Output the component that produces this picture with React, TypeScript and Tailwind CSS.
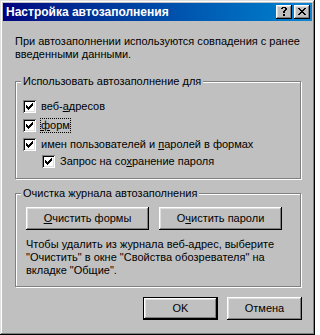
import React from "react";

const raised =
  "shadow-[inset_-1px_-1px_0_0_#000000,inset_1px_1px_0_0_#ffffff,inset_-2px_-2px_0_0_#808080,inset_2px_2px_0_0_#dfdfdf]";

function Check() {
  return (
    <div className="w-[13px] h-[13px] shrink-0 bg-white flex items-start justify-start pl-[3px] pt-[3px] shadow-[inset_1px_1px_0_0_#808080,inset_-1px_-1px_0_0_#ffffff,inset_2px_2px_0_0_#000000,inset_-2px_-2px_0_0_#dfdfdf]">
      <svg width="7" height="7" viewBox="0 0 7 7" shapeRendering="crispEdges">
        <path
          fill="#000"
          d="M6 0h1v1h-1z M5 1h2v1h-2z M0 2h1v1h-1z M4 2h3v1h-3z M0 3h2v1h-2z M3 3h3v1h-3z M0 4h5v1h-5z M1 5h3v1h-3z M2 6h1v1h-1z"
        />
      </svg>
    </div>
  );
}

function Row({ children, className = "" }: { children: React.ReactNode; className?: string }) {
  return (
    <div className={`flex items-center h-[13px] ${className}`}>
      <Check />
      <span className="ml-[5px] leading-[13px] whitespace-nowrap">{children}</span>
    </div>
  );
}

function Btn({ children, className = "" }: { children: React.ReactNode; className?: string }) {
  return (
    <div
      className={`h-[23px] flex items-center justify-center bg-[#c0c0c0] leading-[13px] ${raised} ${className}`}
    >
      {children}
    </div>
  );
}

export default function App() {
  return (
    <div className="w-[315px] h-[335px] bg-[#c0c0c0] p-[3px] flex flex-col text-[11px] text-black [font-family:'Liberation_Sans',Arial,sans-serif] shadow-[inset_-1px_-1px_0_0_#000000,inset_1px_1px_0_0_#dfdfdf,inset_-2px_-2px_0_0_#808080,inset_2px_2px_0_0_#ffffff]">
      {/* title bar */}
      <div className="h-[18px] shrink-0 flex items-center bg-linear-to-r from-[#000080] to-[#1084d0] pl-[3px] pr-[2px]">
        <span className="flex-1 text-white font-bold text-[12px] leading-[14px] whitespace-nowrap">
          Настройка автозаполнения
        </span>
        <div className={`w-[16px] h-[14px] bg-[#c0c0c0] flex items-start justify-start pl-[5px] pt-[2px] ${raised}`}>
          <svg width="6" height="9" viewBox="0 0 6 9" shapeRendering="crispEdges">
            <path
              fill="#000"
              d="M1 0h4v1H1z M0 1h2v1H0z M4 1h2v1H4z M4 2h2v1H4z M3 3h2v1H3z M2 4h2v1H2z M2 5h2v1H2z M2 7h2v1H2z M2 8h2v1H2z"
            />
          </svg>
        </div>
        <div className={`ml-[2px] w-[16px] h-[14px] bg-[#c0c0c0] flex items-start justify-start pl-[4px] pt-[3px] ${raised}`}>
          <svg width="8" height="7" viewBox="0 0 8 7" shapeRendering="crispEdges">
            <path
              fill="#000"
              d="M0 0h2v1H0z M6 0h2v1H6z M1 1h2v1H1z M5 1h2v1H5z M2 2h4v1H2z M3 3h2v1H3z M2 4h4v1H2z M1 5h2v1H1z M5 5h2v1H5z M0 6h2v1H0z M6 6h2v1H6z"
            />
          </svg>
        </div>
      </div>

      {/* body */}
      <div className="flex flex-col pl-[12px] pr-[11px]">
        <p className="mt-[14px] leading-[13px] whitespace-nowrap">
          При автозаполнении используются совпадения с ранее
          <br />
          введенными данными.
        </p>

        {/* group 1 */}
        <div className="mt-[20px] border border-[#808080] shadow-[inset_1px_1px_0_0_#ffffff,1px_1px_0_0_#ffffff] flex flex-col pb-[10px]">
          <div className="-mt-[7px] ml-[5px] px-[2px] w-fit bg-[#c0c0c0] leading-[13px] whitespace-nowrap">
            Использовать автозаполнение для
          </div>
          <Row className="mt-[12px] ml-[7px]">
            веб-<span className="underline decoration-1 underline-offset-[1px]">а</span>дресов
          </Row>
          <div className="flex items-center h-[13px] mt-[6px] ml-[7px]">
            <Check />
            <span className="ml-[4px] leading-[13px] border border-dotted border-black whitespace-nowrap">
              <span className="underline decoration-1 underline-offset-[1px]">ф</span>орм
            </span>
          </div>
          <Row className="mt-[6px] ml-[7px]">
            имен пользователей и <span className="underline decoration-1 underline-offset-[1px]">п</span>аролей в формах
          </Row>
          <Row className="mt-[4px] ml-[26px]">
            Запрос на со<span className="underline decoration-1 underline-offset-[1px]">х</span>ранение пароля
          </Row>
        </div>

        {/* group 2 */}
        <div className="mt-[14px] border border-[#808080] shadow-[inset_1px_1px_0_0_#ffffff,1px_1px_0_0_#ffffff] flex flex-col pb-[9px]">
          <div className="-mt-[7px] ml-[5px] px-[2px] w-fit bg-[#c0c0c0] leading-[13px] whitespace-nowrap">
            Очистка журнала автозаполнения
          </div>
          <div className="mt-[7px] ml-[10px] flex gap-[10px]">
            <Btn className="w-[123px]">
              <span>
                <span className="underline decoration-1 underline-offset-[1px]">О</span>чистить формы
              </span>
            </Btn>
            <Btn className="w-[123px]">
              <span>
                О<span className="underline decoration-1 underline-offset-[1px]">ч</span>истить пароли
              </span>
            </Btn>
          </div>
          <p className="mt-[8px] ml-[10px] leading-[13px] whitespace-nowrap">
            Чтобы удалить из журнала веб-адрес, выберите
            <br />
            "Очистить" в окне "Свойства обозревателя" на
            <br />
            вкладке "Общие".
          </p>
        </div>

        {/* bottom buttons */}
        <div className="mt-[10px] -mr-[1px] flex justify-end gap-[9px]">
          <div className="w-[75px] h-[23px] border border-black flex items-center justify-center bg-[#c0c0c0] shadow-[inset_-1px_-1px_0_0_#000000,inset_1px_1px_0_0_#ffffff,inset_-2px_-2px_0_0_#808080,inset_2px_2px_0_0_#dfdfdf] leading-[13px]">
            OK
          </div>
          <Btn className="w-[75px]">Отмена</Btn>
        </div>
      </div>
    </div>
  );
}
